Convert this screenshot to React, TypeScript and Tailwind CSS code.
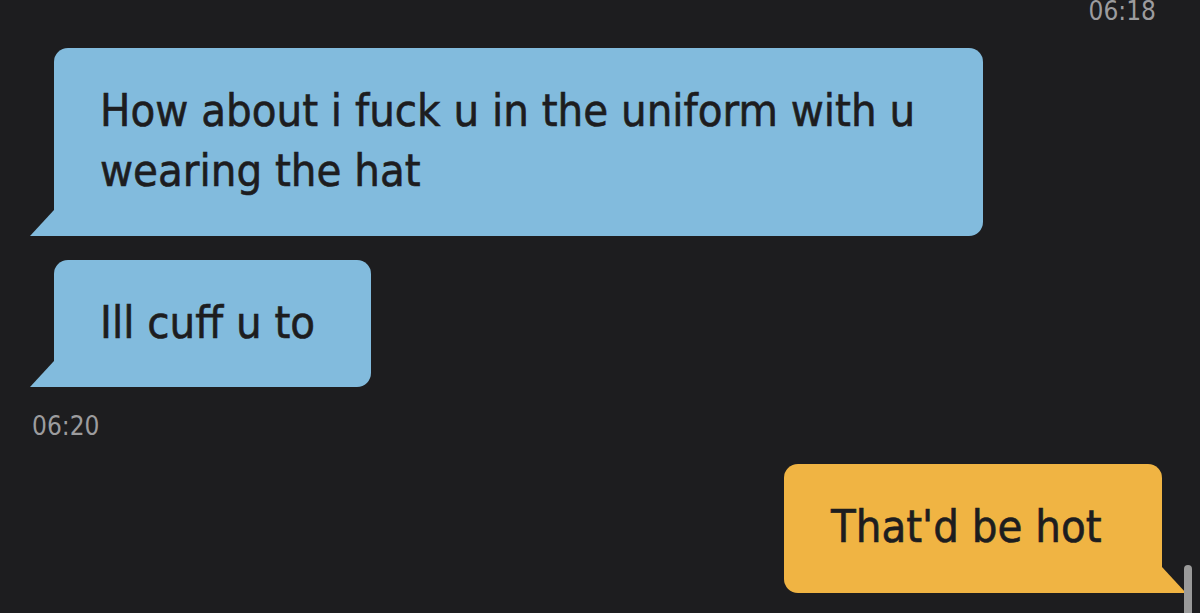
const font = { fontFamily: '"DejaVu Sans Condensed", "DejaVu Sans", sans-serif' };

function Tail({ side, color }: { side: "left" | "right"; color: string }) {
  if (side === "left") {
    return (
      <svg className="absolute bottom-0 left-[-24px]" width="24" height="26" viewBox="0 0 24 26">
        <polygon points="24,0 24,26 0,26" fill={color} />
      </svg>
    );
  }
  return (
    <svg className="absolute bottom-0 right-[-24px]" width="24" height="26" viewBox="0 0 24 26">
      <polygon points="0,0 24,26 0,26" fill={color} />
    </svg>
  );
}

export default function App() {
  return (
    <div className="relative h-[613px] w-[1200px] overflow-hidden bg-[#1d1d1f]" style={font}>
      <div className="flex flex-col">
        {/* timestamp cut at the top */}
        <div className="mt-[-5px] self-end pr-[44px] text-[26px] leading-[32px] text-[#9c9c9e]">06:18</div>

        {/* incoming */}
        <div className="relative ml-[54px] mt-[21px] max-w-[929px] rounded-[14px] rounded-bl-none bg-[#82bbdd] pl-[46px] pr-[40px] pt-[33px] pb-[35px] text-[45px] leading-[60px] text-[#1d1d1f] [-webkit-text-stroke:0.6px_#1d1d1f]">
          How about i fuck u in the uniform with u wearing the hat
          <Tail side="left" color="#82bbdd" />
        </div>
        <div className="relative ml-[54px] mt-[24px] w-[317px] rounded-[14px] rounded-bl-none bg-[#82bbdd] pl-[46px] pt-[33px] pb-[34px] text-[45px] leading-[60px] text-[#1d1d1f] [-webkit-text-stroke:0.6px_#1d1d1f]">
          Ill cuff u to
          <Tail side="left" color="#82bbdd" />
        </div>
        <div className="ml-[32px] mt-[23px] text-[26px] leading-[32px] text-[#9c9c9e]">06:20</div>

        {/* outgoing */}
        <div className="relative mr-[38px] mt-[22px] w-[378px] self-end rounded-[14px] rounded-br-none bg-[#f0b443] pl-[47px] pt-[33px] pb-[36px] text-[45px] leading-[60px] text-[#1d1d1f] [-webkit-text-stroke:0.6px_#1d1d1f]">
          That'd be hot
          <Tail side="right" color="#f0b443" />
        </div>
      </div>

      {/* scrollbar */}
      <div className="absolute bottom-0 right-[8px] h-[48px] w-[8px] rounded-t-full bg-[#9a9a9a]" />
    </div>
  );
}
